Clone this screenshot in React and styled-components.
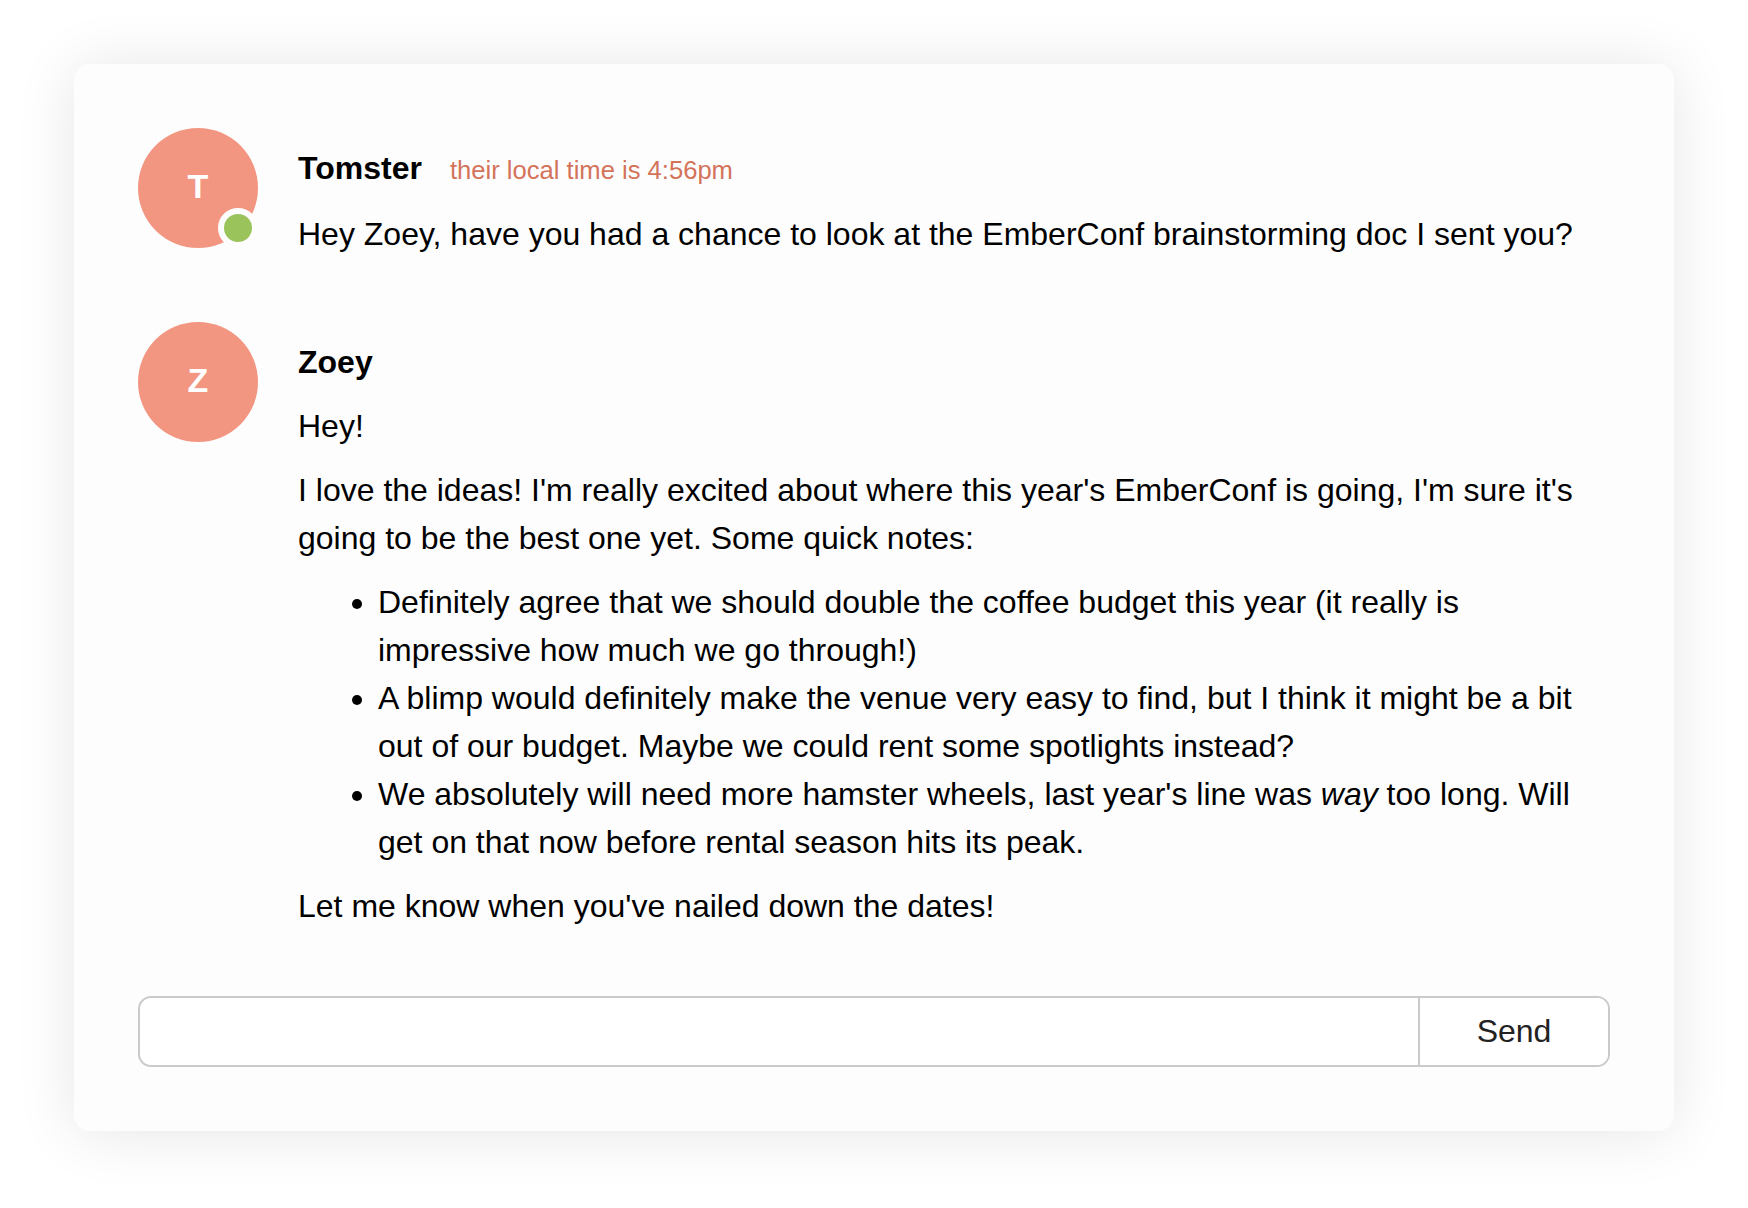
import React from "react";
import styled, { createGlobalStyle } from "styled-components";

const GlobalStyle = createGlobalStyle`
  html, body {
    margin: 0;
    padding: 0;
    background: #ffffff;
  }
  body {
    font-family: "Liberation Sans", Arial, Helvetica, sans-serif;
    color: #000;
  }
`;

const messages = [
  {
    id: 1,
    name: "Tomster",
    initial: "T",
    online: true,
    localTime: "4:56pm",
    renderBody: () => (
      <Text>
        Hey Zoey, have you had a chance to look at the EmberConf brainstorming
        doc I sent you?
      </Text>
    ),
  },
  {
    id: 2,
    name: "Zoey",
    initial: "Z",
    renderBody: () => (
      <>
        <Text>Hey!</Text>
        <Text>
          I love the ideas! I'm really excited about where this year's
          EmberConf is going, I'm sure it's going to be the best one yet. Some
          quick notes:
        </Text>
        <List>
          <li>
            Definitely agree that we should double the coffee budget this year
            (it really is impressive how much we go through!)
          </li>
          <li>
            A blimp would definitely make the venue very easy to find, but I
            think it might be a bit out of our budget. Maybe we could rent some
            spotlights instead?
          </li>
          <li>
            We absolutely will need more hamster wheels, last year's line was{" "}
            <em>way</em> too long. Will get on that now before rental season
            hits its peak.
          </li>
        </List>
        <Text>Let me know when you've nailed down the dates!</Text>
      </>
    ),
  },
];

export default function App() {
  return (
    <Page>
      <GlobalStyle />
      <Card>
        <MessageList>
          {messages.map((message) => (
            <Message key={message.id}>
              <Avatar>
                {message.initial}
                {message.online && <OnlineDot />}
              </Avatar>
              <MessageContent>
                <MessageHeader>
                  <Username>{message.name}</Username>
                  {message.localTime && (
                    <LocalTime>their local time is {message.localTime}</LocalTime>
                  )}
                </MessageHeader>
                {message.renderBody()}
              </MessageContent>
            </Message>
          ))}
        </MessageList>
        <Composer>
          <ComposerInput type="text" />
          <SendButton type="button">Send</SendButton>
        </Composer>
      </Card>
    </Page>
  );
}

const Page = styled.div`
  padding: 64px 74px 78px 74px;
`;

const Card = styled.div`
  background: #fdfdfd;
  border-radius: 16px;
  box-shadow: 0 2px 60px rgba(0, 0, 0, 0.1);
  padding: 64px;
  display: flex;
  flex-direction: column;
`;

const MessageList = styled.div`
  display: flex;
  flex-direction: column;
  gap: 64px;
`;

const Message = styled.div`
  display: flex;
  align-items: flex-start;
  gap: 40px;
`;

const Avatar = styled.div`
  position: relative;
  flex: none;
  width: 120px;
  height: 120px;
  border-radius: 50%;
  background: #f29682;
  color: #fff;
  font-weight: 700;
  font-size: 34px;
  padding-bottom: 3px;
  box-sizing: border-box;
  display: flex;
  align-items: center;
  justify-content: center;
`;

const OnlineDot = styled.span`
  position: absolute;
  right: 0;
  bottom: 0;
  width: 28px;
  height: 28px;
  border-radius: 50%;
  background: #9bc35c;
  border: 6px solid #fdfdfd;
`;

const MessageContent = styled.div`
  flex: 1;
  min-width: 0;
  padding-top: 16px;
  font-size: 32px;
  line-height: 48px;
`;

const MessageHeader = styled.div`
  display: flex;
  align-items: baseline;
  gap: 28px;
  margin-bottom: 16px;
`;

const Username = styled.span`
  font-weight: 700;
  font-size: 32px;
`;

const LocalTime = styled.span`
  font-size: 25.6px;
  color: #d3735a;
`;

const Text = styled.p`
  margin: 0 0 16px 0;

  &:last-child {
    margin-bottom: 0;
  }
`;

const List = styled.ul`
  margin: 0 0 16px 0;
  padding-left: 80px;
`;

const Composer = styled.div`
  display: flex;
  box-sizing: border-box;
  margin-top: 66px;
  height: 71px;
  border: 2px solid #cacaca;
  border-radius: 13px;
  background: #fff;
  overflow: hidden;
`;

const ComposerInput = styled.input`
  flex: 1;
  border: none;
  outline: none;
  background: transparent;
  font-family: inherit;
  font-size: 32px;
  padding: 0 20px;
`;

const SendButton = styled.button`
  flex: none;
  width: 190px;
  border: none;
  border-left: 2px solid #cacaca;
  background: #fff;
  color: #222;
  font-family: inherit;
  font-size: 32px;
  cursor: pointer;
`;
